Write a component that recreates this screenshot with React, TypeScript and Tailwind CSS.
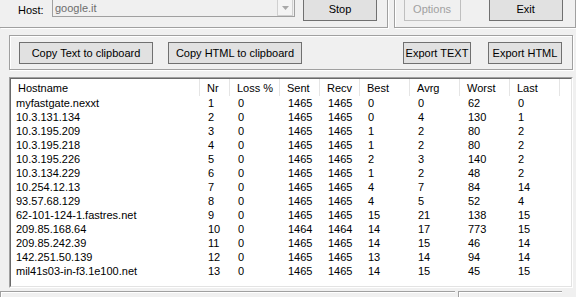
import React from 'react';

type Row = [string, number, number, number, number, number, number, number, number];

const rows: Row[] = [
  ['myfastgate.nexxt', 1, 0, 1465, 1465, 0, 0, 62, 0],
  ['10.3.131.134', 2, 0, 1465, 1465, 0, 4, 130, 1],
  ['10.3.195.209', 3, 0, 1465, 1465, 1, 2, 80, 2],
  ['10.3.195.218', 4, 0, 1465, 1465, 1, 2, 80, 2],
  ['10.3.195.226', 5, 0, 1465, 1465, 2, 3, 140, 2],
  ['10.3.134.229', 6, 0, 1465, 1465, 1, 2, 48, 2],
  ['10.254.12.13', 7, 0, 1465, 1465, 4, 7, 84, 14],
  ['93.57.68.129', 8, 0, 1465, 1465, 4, 5, 52, 4],
  ['62-101-124-1.fastres.net', 9, 0, 1465, 1465, 15, 21, 138, 15],
  ['209.85.168.64', 10, 0, 1464, 1464, 14, 17, 773, 15],
  ['209.85.242.39', 11, 0, 1465, 1465, 14, 15, 46, 14],
  ['142.251.50.139', 12, 0, 1465, 1465, 13, 14, 94, 14],
  ['mil41s03-in-f3.1e100.net', 13, 0, 1465, 1465, 14, 15, 45, 15],
];

const columns = [
  { name: 'Hostname', w: 'w-[189px]' },
  { name: 'Nr', w: 'w-[30px]' },
  { name: 'Loss %', w: 'w-[50px]' },
  { name: 'Sent', w: 'w-[40px]' },
  { name: 'Recv', w: 'w-[40px]' },
  { name: 'Best', w: 'w-[50px]' },
  { name: 'Avrg', w: 'w-[50px]' },
  { name: 'Worst', w: 'w-[50px]' },
  { name: 'Last', w: 'w-[50px]' },
];

function Btn({ label, w, disabled, className = '' }: { label: string; w: string; disabled?: boolean; className?: string }) {
  return (
    <div
      className={`${w} ${className} flex items-center justify-center border bg-[#e1e1e1] ${
        disabled ? 'border-[#bfbfbf] text-[#a0a0a0] bg-[#f0f0f0]' : 'border-[#707070] text-black'
      }`}
    >
      {label}
    </div>
  );
}

export default function App() {
  return (
    <div
      className="w-[576px] h-[297px] overflow-hidden bg-[#f0f0f0] text-[11px] leading-[14px] text-black flex flex-col"
      style={{ fontFamily: '"Liberation Sans", Arial, sans-serif' }}
    >
      {/* top groups */}
      <div className="flex h-[31px] shrink-0">
        <div className="w-[387px] h-[31px] border-r border-b border-[#a0a0a0] shadow-[1px_1px_0_#ffffff] flex items-start pl-[18px] -mt-[4px] box-content">
          <div className="w-[34px] mt-[7px]">Host:</div>
          <div className="w-[243px] h-[21px] border border-[#a0a0a0] bg-[#f0f0f0] flex items-center">
            <div className="flex-1 pl-[2px] text-[#6d6d6d] pt-[3px]">google.it</div>
            <div className="w-[16px] h-[17px] mr-[1px] mt-[2px] border border-[#d0d0d0] bg-[#f4f4f4] flex items-center justify-center">
              <svg width="7" height="4" viewBox="0 0 7 4">
                <path d="M0 0h7L3.5 4z" fill="#a8a8a8" />
              </svg>
            </div>
          </div>
          <Btn label="Stop" w="w-[74px]" className="h-[23px] mt-[2px] ml-[8px] pb-[2px]" />
        </div>
        <div className="ml-[6px] w-[180px] h-[31px] border-l border-r border-b border-[#a0a0a0] shadow-[inset_1px_0_0_#ffffff,1px_1px_0_#ffffff] flex items-start pl-[9px] -mt-[4px] box-content">
          <Btn label="Options" w="w-[57px]" disabled className="h-[23px] mt-[2px] pb-[2px]" />
          <Btn label="Exit" w="w-[74px]" className="h-[23px] mt-[2px] ml-[28px] pb-[2px]" />
        </div>
      </div>

      {/* clipboard / export group */}
      <div className="mt-[4px] ml-[9px] w-[564px] h-[35px] shrink-0 border border-[#a0a0a0] shadow-[inset_1px_1px_0_#ffffff,1px_1px_0_#ffffff] flex items-start pt-[6px] pl-[9px] pr-[10px]">
        <Btn label="Copy Text to clipboard" w="w-[134px]" className="h-[22px]" />
        <Btn label="Copy HTML to clipboard" w="w-[134px]" className="h-[22px] ml-[15px]" />
        <div className="flex-1" />
        <Btn label="Export TEXT" w="w-[68px]" className="h-[22px]" />
        <Btn label="Export HTML" w="w-[74px]" className="h-[22px] ml-[17px]" />
      </div>

      {/* list view */}
      <div className="mt-[7px] ml-[9px] w-[564px] h-[211px] shrink-0 border-t border-l border-[#a0a0a0] border-r border-b border-r-white border-b-white bg-white">
        <div className="h-full border-t border-l border-[#696969] border-r border-b border-r-[#e3e3e3] border-b-[#e3e3e3] overflow-hidden">
          <div className="flex h-[17px] bg-white">
            {columns.map((c) => (
              <div key={c.name} className={`${c.w} shrink-0 border-r border-[#e5e5e5] pl-[7px] flex items-center`}>
                {c.name}
              </div>
            ))}
            <div className="flex-1" />
          </div>
          {rows.map((r) => (
            <div key={r[1]} className="flex h-[14px]">
              {r.map((v, i) => (
                <div key={i} className={`${columns[i].w} shrink-0 ${i === 0 ? 'pl-[5px]' : 'pl-[8px]'} whitespace-nowrap`}>
                  {v}
                </div>
              ))}
            </div>
          ))}
        </div>
      </div>

      {/* status bar */}
      <div className="flex mt-[3px] shrink-0">
        <div className="w-[455px] h-[6px] border-t border-l border-[#a0a0a0] shadow-[inset_1px_1px_0_#ffffff]" />
        <div className="ml-[3px] w-[104px] h-[6px] border-t border-l border-[#a0a0a0] shadow-[inset_1px_1px_0_#ffffff]" />
      </div>
    </div>
  );
}
